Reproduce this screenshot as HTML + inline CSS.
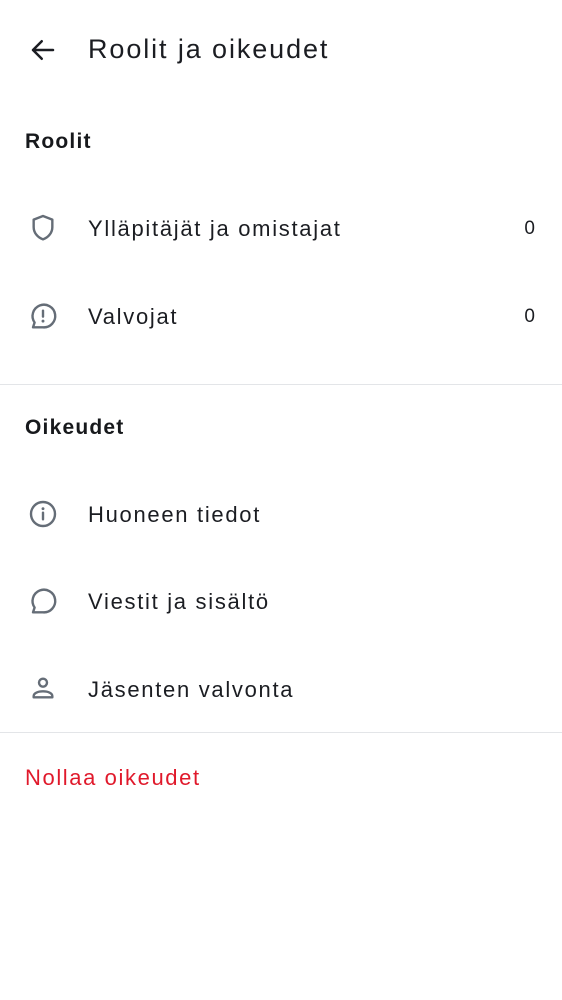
<!DOCTYPE html>
<html><head><meta charset="utf-8"><style>
body{margin:0;width:562px;height:1000px;background:#fff;font-family:"Liberation Sans",sans-serif;color:#1b1d22;position:relative;overflow:hidden}
.t{position:absolute;white-space:nowrap}
svg{position:absolute}
.ic{fill:none;stroke:#656d77;stroke-width:1.8;stroke-linecap:round;stroke-linejoin:round}
.hr{position:absolute;left:0;width:562px;height:1px;background:#e3e5e8}
.row{font-size:22px;left:88px;letter-spacing:1.7px}
.h{font-size:21px;font-weight:bold;left:25px;color:#17191c;letter-spacing:1.2px}
.n{font-size:19px;right:27px}
</style></head><body>
<svg width="30" height="30" viewBox="0 0 24 24" style="left:28px;top:35px"><path d="M20 12H4M11 5l-7 7 7 7" fill="none" stroke="#1b1d22" stroke-width="2" stroke-linecap="round" stroke-linejoin="round"/></svg>
<div class="t" style="left:88px;top:34px;font-size:27px;letter-spacing:1.9px">Roolit ja oikeudet</div>
<div class="t h" style="top:130px">Roolit</div>
<svg width="32" height="32" viewBox="0 0 24 24" style="left:27px;top:212px"><path class="ic" d="M12 3l7 2.7v5.6c0 4.3-3 7.8-7 9.2-4-1.4-7-4.9-7-9.2V5.7z"/></svg>
<div class="t row" style="top:216px">Ylläpitäjät ja omistajat</div>
<div class="t n" style="top:218px">0</div>
<svg width="32" height="32" viewBox="0 0 24 24" style="left:27px;top:300px"><path class="ic" d="M4.5 20.5l1.2-3.6A8.5 8.5 0 1 1 12 20.5z"/><path class="ic" d="M12 8v4.5"/><circle cx="12" cy="15.8" r="0.6" fill="#656d77" stroke="#656d77"/></svg>
<div class="t row" style="top:304px">Valvojat</div>
<div class="t n" style="top:306px">0</div>
<div class="hr" style="top:384px"></div>
<div class="t h" style="top:416px">Oikeudet</div>
<svg width="32" height="32" viewBox="0 0 24 24" style="left:27px;top:498px"><circle class="ic" cx="12" cy="12" r="9"/><path class="ic" d="M12 11v5"/><circle cx="12" cy="8" r="0.6" fill="#656d77" stroke="#656d77"/></svg>
<div class="t row" style="top:502px">Huoneen tiedot</div>
<svg width="32" height="32" viewBox="0 0 24 24" style="left:27px;top:585px"><path class="ic" d="M4.5 20.5l1.2-3.6A8.5 8.5 0 1 1 12 20.5z"/></svg>
<div class="t row" style="top:589px">Viestit ja sisältö</div>
<svg width="32" height="32" viewBox="0 0 24 24" style="left:27px;top:672px"><circle class="ic" cx="12" cy="8" r="3"/><path class="ic" d="M5 19v-1c0-2 3-3.5 7-3.5s7 1.5 7 3.5v1z"/></svg>
<div class="t row" style="top:677px">Jäsenten valvonta</div>
<div class="hr" style="top:732px"></div>
<div class="t" style="left:25px;top:765px;font-size:22px;color:#e0192b;letter-spacing:1.6px">Nollaa oikeudet</div>
</body></html>
